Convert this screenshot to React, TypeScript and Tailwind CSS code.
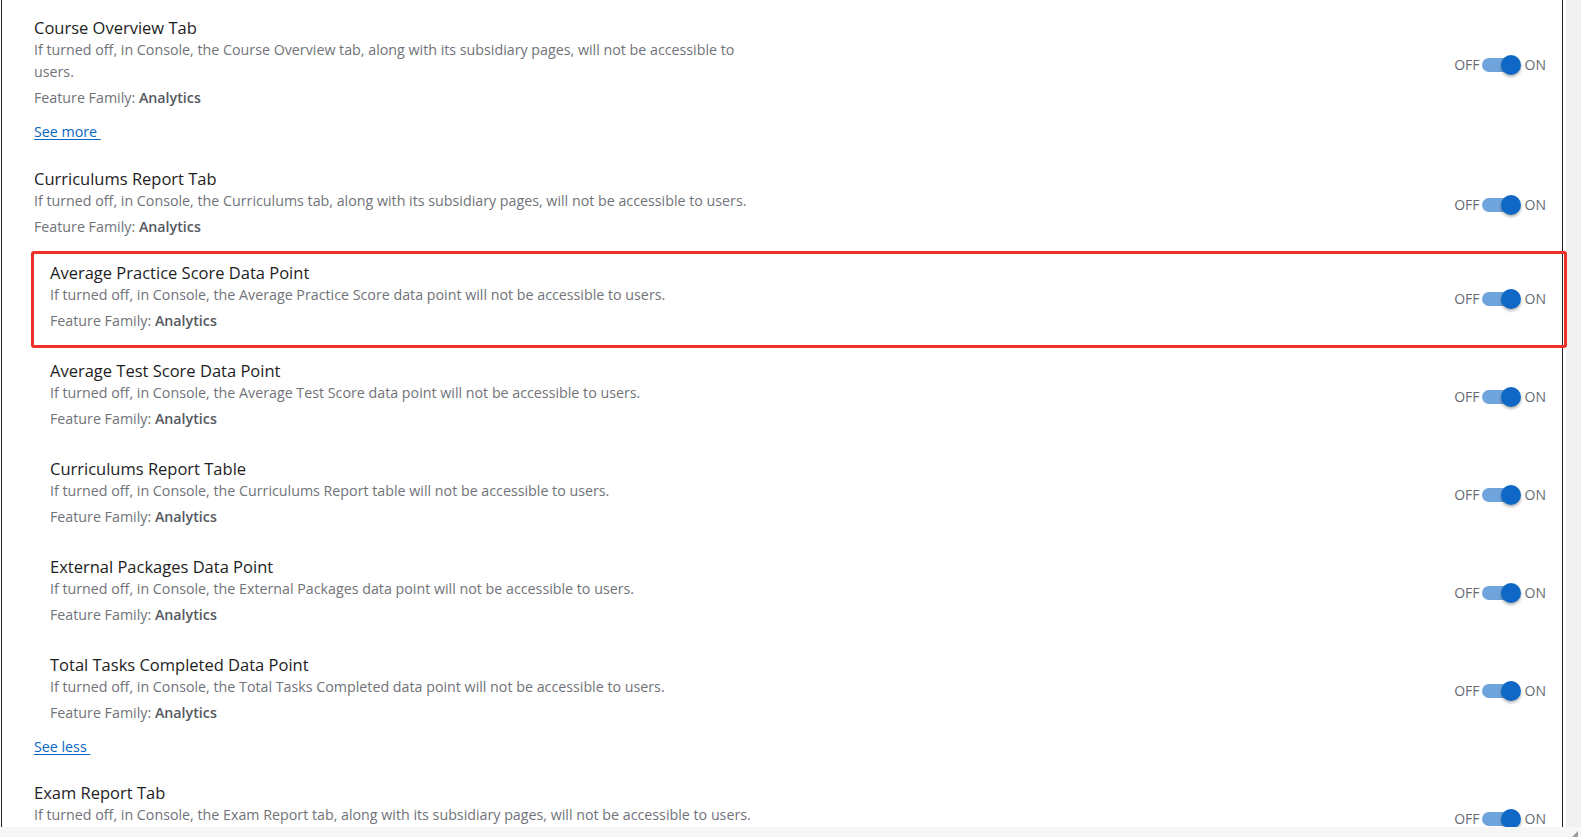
import React from 'react';

type Feature = {
  title: string;
  description: string;
  family: string;
};

const topFeature: Feature = {
  title: 'Course Overview Tab',
  description:
    'If turned off, in Console, the Course Overview tab, along with its subsidiary pages, will not be accessible to users.',
  family: 'Analytics',
};

const curriculumsTab: Feature = {
  title: 'Curriculums Report Tab',
  description:
    'If turned off, in Console, the Curriculums tab, along with its subsidiary pages, will not be accessible to users.',
  family: 'Analytics',
};

const nested: Feature[] = [
  {
    title: 'Average Practice Score Data Point',
    description: 'If turned off, in Console, the Average Practice Score data point will not be accessible to users.',
    family: 'Analytics',
  },
  {
    title: 'Average Test Score Data Point',
    description: 'If turned off, in Console, the Average Test Score data point will not be accessible to users.',
    family: 'Analytics',
  },
  {
    title: 'Curriculums Report Table',
    description: 'If turned off, in Console, the Curriculums Report table will not be accessible to users.',
    family: 'Analytics',
  },
  {
    title: 'External Packages Data Point',
    description: 'If turned off, in Console, the External Packages data point will not be accessible to users.',
    family: 'Analytics',
  },
  {
    title: 'Total Tasks Completed Data Point',
    description: 'If turned off, in Console, the Total Tasks Completed data point will not be accessible to users.',
    family: 'Analytics',
  },
];

const examTab: Feature = {
  title: 'Exam Report Tab',
  description:
    'If turned off, in Console, the Exam Report tab, along with its subsidiary pages, will not be accessible to users.',
  family: 'Analytics',
};

function Toggle() {
  return (
    <div className="mt-[4px] flex shrink-0 items-center text-[14px] leading-[20px] text-[#666b73]">
      <span>OFF</span>
      <div className="relative ml-[2px] mr-[3px] h-[20px] w-[40px]">
        <div className="absolute left-0 top-[3px] h-[14px] w-[34px] rounded-full bg-[#0f67c6]/60" />
        <div className="absolute left-[19px] top-0 h-[20px] w-[20px] rounded-full bg-[#0f67c6] shadow-[0_2px_3px_rgba(0,0,0,0.3)]" />
      </div>
      <span>ON</span>
    </div>
  );
}

function FeatureRow({ feature, highlighted }: { feature: Feature; highlighted?: boolean }) {
  return (
    <div className="relative flex items-center justify-between">
      <div className="max-w-[736px]">
        <div className="text-[16.5px] leading-[22px] text-[#1e1e1e]">{feature.title}</div>
        <div className="text-[14.25px] leading-[22px] text-[#707379]">{feature.description}</div>
        <div className="mt-[4px] text-[14.25px] leading-[22px] text-[#707379]">
          Feature Family: <span className="font-semibold text-[#55585e]">{feature.family}</span>
        </div>
      </div>
      <Toggle />
      {highlighted && (
        <span className="pointer-events-none absolute -left-[19px] -right-[21px] -top-[11px] -bottom-[16px] rounded-[3px] border-[3px] border-[#ee2f2a]" />
      )}
    </div>
  );
}

function Link({ children }: { children: React.ReactNode }) {
  return (
    <a href="#" className="self-start text-[14.25px] leading-[22px] text-[#0b66c2] underline underline-offset-2">
      {children}
    </a>
  );
}

export default function App() {
  return (
    <div className="flex h-[837px] w-[1581px] flex-col overflow-hidden bg-white font-['Open_Sans',sans-serif]">
      <div className="flex min-h-0 flex-1">
        <div className="ml-[1px] w-[1562px] border-x border-[#222222] pl-[32px] pr-[16px] pt-[17px]">
          <div className="flex flex-col">
            <FeatureRow feature={topFeature} />
            <div className="mt-[12px] flex">
              <Link>See more&nbsp;</Link>
            </div>
            <div className="mt-[25px]">
              <FeatureRow feature={curriculumsTab} />
            </div>
            <div className="mt-[24px] flex flex-col gap-[28px] pl-[16px]">
              {nested.map((f, i) => (
                <FeatureRow key={f.title} feature={f} highlighted={i === 0} />
              ))}
            </div>
            <div className="mt-[12px] flex">
              <Link>See less&nbsp;</Link>
            </div>
            <div className="mt-[24px]">
              <FeatureRow feature={examTab} />
            </div>
          </div>
        </div>
        <div className="w-[3px] bg-white" />
        <div className="flex-1 bg-[#f1f1f1]" />
      </div>
      <div className="relative h-[10px] shrink-0 bg-[#f6f6f6]">
        <span className="absolute bottom-0 right-[3px] h-0 w-0 border-b-[6px] border-l-[6px] border-b-[#9a9a9a] border-l-transparent" />
      </div>
    </div>
  );
}
